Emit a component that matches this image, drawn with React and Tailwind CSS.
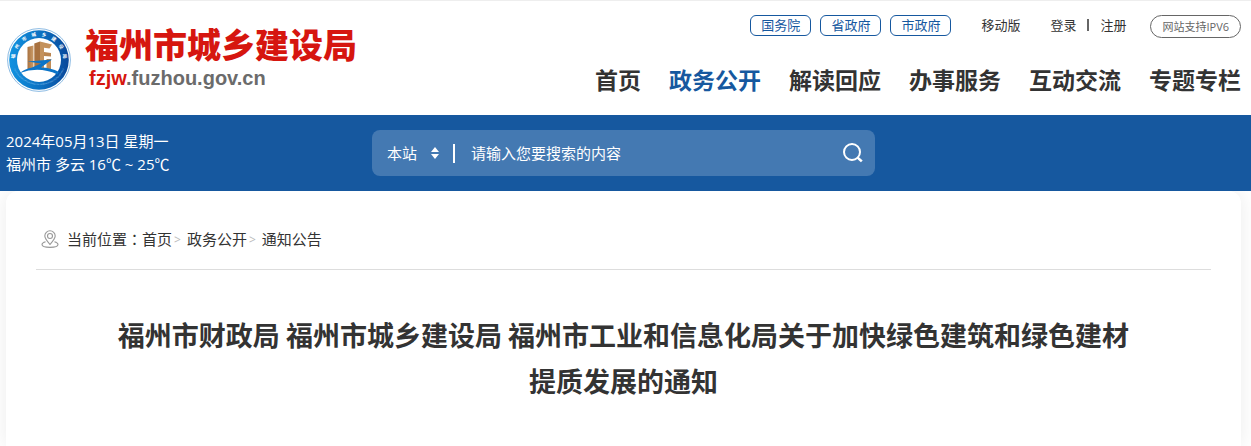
const govLinks = ["国务院", "省政府", "市政府"];

const navItems = [
    { label: "首页" },
    { label: "政务公开", active: true },
    { label: "解读回应" },
    { label: "办事服务" },
    { label: "互动交流" },
    { label: "专题专栏" },
];

const crumbs = ["首页", "政务公开", "通知公告"];

function Emblem() {
    return (
        <svg className="size-16 shrink-0" viewBox="0 0 64 64" aria-hidden="true">
            <defs>
                <linearGradient id="ring" x1="0" y1="0" x2="1" y2="0">
                    <stop offset="0" stopColor="#1192e0" />
                    <stop offset="0.55" stopColor="#0b6fc0" />
                    <stop offset="1" stopColor="#08479a" />
                </linearGradient>
                <linearGradient id="wood" x1="0" y1="0" x2="1" y2="0">
                    <stop offset="0" stopColor="#a8713f" />
                    <stop offset="1" stopColor="#cb9c69" />
                </linearGradient>
                <path id="topArc" d="M9 40 A24.3 24.3 0 1 1 55 40" />
                <path id="bottomArc" d="M4.6 34 A27.8 27.8 0 0 0 59.4 34" />
            </defs>
            <circle cx="32" cy="32" r="31.4" fill="#fff" stroke="#6fa9dc" strokeWidth="0.8" />
            <circle cx="32" cy="32" r="29.8" fill="url(#ring)" />
            <circle cx="32" cy="32" r="22" fill="#fff" />
            <text fill="#fff" fontSize="4.6" fontWeight="700" fontFamily="'Noto Sans CJK SC', sans-serif">
                <textPath href="#topArc" startOffset="50%" textAnchor="middle">{"福州市城乡建设局".split("").join("\u00a0\u00a0\u00a0\u00a0\u00a0")}</textPath>
            </text>
            <text fill="#8cc4ee" fontSize="2" fontFamily="'Liberation Sans', sans-serif">
                <textPath href="#bottomArc" startOffset="50%" textAnchor="middle">FUZHOU MUNICIPAL BUREAU OF URBAN-RURAL DEVELOPMENT</textPath>
            </text>
            <path d="M20.5 19 L26.5 17.5 V42 H20.5 Z" fill="url(#wood)" />
            <path d="M27.3 15.5 L33 13.5 V41 H27.3 Z" fill="#a8713f" />
            <path d="M33 13.5 L45 16.5 L42.5 20.5 L37 19.8 V41 H33 Z" fill="#c4925d" />
            <path d="M37 24 L44 25 V28.5 L37 28 Z" fill="#bb8651" />
            <path d="M39.5 31 H44 V41 H39.5 Z" fill="#c08c57" />
            <path d="M20.5 33.5 L45 31.5 L34 39.5 Q44 39.5 52 44 L50.5 46.5 Q32 38 13 45 Q17 41 25 39.5 L34 35.5 Z" fill="#0b74c8" />
        </svg>
    );
}

function TopLinks() {
    return (
        <div className="flex items-start text-[13px] leading-5 text-[#333]">
            <div className="flex gap-[9px]">
                {govLinks.map(name => (
                    <a key={name} href="#" className="rounded-md border border-[#16589f] px-[10px] leading-[19px] text-[#16589f]">
                        {name}
                    </a>
                ))}
            </div>
            <a href="#" className="ml-[30px]">移动版</a>
            <div className="ml-[30px] flex">
                <a href="#">登录</a>
                <span className="mx-[11px] mt-1 h-3 w-[2px] bg-[#666]" />
                <a href="#">注册</a>
            </div>
            <a href="#" className="ml-6 rounded-full border border-[#666] px-[11px] text-[11px] leading-[21px] text-[#666]">
                网站支持IPV6
            </a>
        </div>
    );
}

function Header() {
    return (
        <header className="flex justify-between border-t border-[#eee] bg-white pr-[10px] pb-[17px] pl-[7px]">
            <a href="#" className="flex items-start gap-[14px] pt-[27px]">
                <Emblem />
                <div className="-mt-1">
                    <div className="text-[34px] leading-[42px] font-black whitespace-nowrap text-[#d6160f]">
                        福州市城乡建设局
                    </div>
                    <div className="pl-1 font-['Liberation_Sans',sans-serif] text-xl leading-6 font-bold text-[#6b6b6b]">
                        <span className="text-[#d6160f]">fzjw</span>.fuzhou.gov.cn
                    </div>
                </div>
            </a>
            <div className="flex flex-col items-end gap-6 pt-[14px]">
                <TopLinks />
                <nav className="flex gap-7 text-[23px] leading-9 font-bold whitespace-nowrap text-[#333]">
                    {navItems.map(item => (
                        <a key={item.label} href="#" className={item.active ? "text-[#16589f]" : ""}>
                            {item.label}
                        </a>
                    ))}
                </nav>
            </div>
        </header>
    );
}

function SearchBox() {
    return (
        <form className="flex h-[46px] items-center rounded-lg bg-white/20 pr-3 pl-[15px] text-[15px] text-white" onSubmit={e => e.preventDefault()}>
            <label className="flex items-center gap-2">
                <select aria-label="搜索范围" className="w-9 appearance-none bg-transparent leading-6 outline-none">
                    <option>本站</option>
                </select>
                <svg className="h-3 w-2" viewBox="0 0 8 12" fill="currentColor" aria-hidden="true">
                    <path d="M4 0 L8 5 H0 Z M0 7 H8 L4 12 Z" />
                </svg>
            </label>
            <span className="ml-[14px] h-[19px] w-[2px] bg-white" />
            <input
                type="text"
                aria-label="搜索"
                placeholder="请输入您要搜索的内容"
                className="ml-4 min-w-0 flex-1 bg-transparent leading-6 outline-none placeholder:text-white"
            />
            <button type="submit" aria-label="搜索">
                <svg className="size-5" viewBox="0 0 20 20" fill="none" stroke="currentColor" strokeWidth="2" aria-hidden="true">
                    <circle cx="9" cy="9" r="8" />
                    <path d="M14.6 14.6 L18.8 18.4" strokeWidth="2.6" />
                </svg>
            </button>
        </form>
    );
}

function InfoBar() {
    return (
        <div className="relative z-10 grid grid-cols-[1fr_minmax(0,503px)_1fr] items-center bg-[#16589f] py-[15px] pr-[10px] pl-[6px] text-white">
            <div className="text-[15px] leading-[23px]">
                <p>2024年05月13日 星期一</p>
                <p>福州市 多云 16℃ ~ 25℃</p>
            </div>
            <SearchBox />
        </div>
    );
}

function Breadcrumb() {
    return (
        <div className="flex items-center border-b border-[#ddd] pt-[35px] pr-1 pb-[17px] pl-[5px] text-[15px] leading-[25px] text-[#333]">
            <svg className="mr-2 size-[18px]" viewBox="0 0 18 18" fill="none" stroke="#999" strokeWidth="1.1" aria-hidden="true">
                <path d="M9 14.4 C6 11 3.8 8.6 3.8 6 A5.2 5.2 0 0 1 14.2 6 C14.2 8.6 12 11 9 14.4 Z" />
                <circle cx="9" cy="6" r="2.5" />
                <path d="M4.6 11.8 C2.4 12.4 1 13.4 1 14.6 C1 16.3 4.4 17.4 9 17.4 C13.6 17.4 17 16.3 17 14.6 C17 13.4 15.6 12.4 13.4 11.8" />
            </svg>
            <span>当前位置<span className="font-['Noto_Sans_CJK_TC',sans-serif]">：</span></span>
            {crumbs.map((name, idx) => (
                <span key={name} className="flex">
                    {idx > 0 && <span className="mr-[6px] ml-[2px] text-xs leading-[25px] text-[#bbb]">&gt;</span>}
                    <a href="#">{name}</a>
                </span>
            ))}
        </div>
    );
}

export default function App() {
    return (
        <div className="flex min-h-screen flex-col bg-white font-['Open_Sans','Noto_Sans_CJK_SC',sans-serif]">
            <Header />
            <InfoBar />
            <main className="mr-[10px] ml-[6px] flex-1 rounded-t-xl bg-white px-[30px] pb-8 shadow-[0_0_20px_rgba(0,0,0,0.08)]">
                <Breadcrumb />
                <h1 className="px-[70px] pt-[42px] text-center font-['Noto_Sans_CJK_SC',sans-serif] text-[27px] leading-[46px] font-bold text-[#333]">
                    福州市财政局 福州市城乡建设局 福州市工业和信息化局关于加快绿色建筑和绿色建材提质发展的通知
                </h1>
            </main>
        </div>
    );
}
